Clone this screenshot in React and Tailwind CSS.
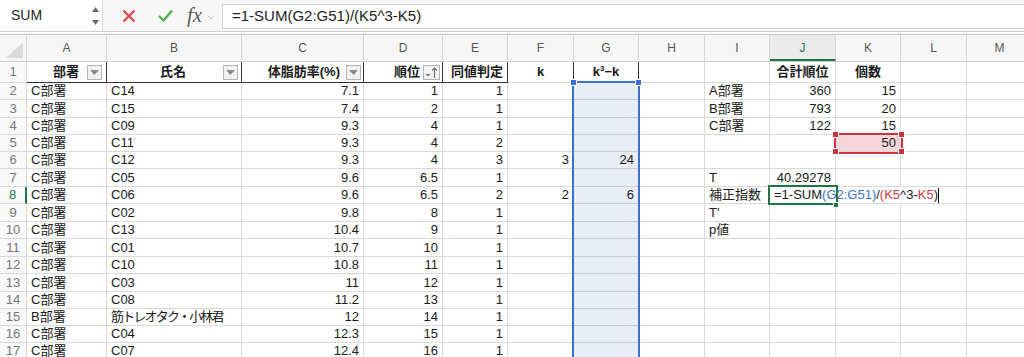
import React from 'react';

const LETTERS = 'ABCDEFGHIJKLM'.split('');
const W = [
  'w-[80px]', 'w-[135px]', 'w-[122px]', 'w-[79px]', 'w-[65px]', 'w-[66px]', 'w-[65px]',
  'w-[66px]', 'w-[65px]', 'w-[66px]', 'w-[65px]', 'w-[66px]', 'w-[66px]',
];
const LEFT = [0, 1, 8];

// row number, row height, then A..K
const rows = [
  [2, 'h-[17px]', 'C部署', 'C14', '7.1', '1', '1', '', '', '', 'A部署', '360', '15'],
  [3, 'h-[18px]', 'C部署', 'C15', '7.4', '2', '1', '', '', '', 'B部署', '793', '20'],
  [4, 'h-[17px]', 'C部署', 'C09', '9.3', '4', '1', '', '', '', 'C部署', '122', '15'],
  [5, 'h-[17px]', 'C部署', 'C11', '9.3', '4', '2', '', '', '', '', '', '50'],
  [6, 'h-[17px]', 'C部署', 'C12', '9.3', '4', '3', '3', '24'],
  [7, 'h-[18px]', 'C部署', 'C05', '9.6', '6.5', '1', '', '', '', 'T', '40.29278'],
  [8, 'h-[17px]', 'C部署', 'C06', '9.6', '6.5', '2', '2', '6', '', '補正指数'],
  [9, 'h-[18px]', 'C部署', 'C02', '9.8', '8', '1', '', '', '', "T'"],
  [10, 'h-[17px]', 'C部署', 'C13', '10.4', '9', '1', '', '', '', 'p値'],
  [11, 'h-[18px]', 'C部署', 'C01', '10.7', '10', '1'],
  [12, 'h-[17px]', 'C部署', 'C10', '10.8', '11', '1'],
  [13, 'h-[18px]', 'C部署', 'C03', '11', '12', '1'],
  [14, 'h-[17px]', 'C部署', 'C08', '11.2', '13', '1'],
  [15, 'h-[17px]', 'B部署', '筋トレオタク・小林君', '12', '14', '1'],
  [16, 'h-[17px]', 'C部署', 'C04', '12.3', '15', '1'],
  [17, 'h-[17px]', 'C部署', 'C07', '12.4', '16', '1'],
];

function FilterBtn() {
  return (
    <span className="w-[15px] h-[15px] shrink-0 border border-[#b5b5b5] bg-[#f2f2f2] flex items-center justify-center">
      <svg width="9" height="5" viewBox="0 0 9 5"><path d="M0 0h9L4.5 5z" fill="#8a8a8a" /></svg>
    </span>
  );
}

function SortBtn() {
  return (
    <span className="w-[17px] h-[15px] shrink-0 border border-[#b5b5b5] bg-[#f2f2f2] flex items-center justify-center">
      <svg width="15" height="13" viewBox="0 0 15 13">
        <path d="M1.5 8h5L4 10.5z" fill="#7a7a7a" />
        <path d="M10.5 12V2M8 4.5 10.5 2 13 4.5" stroke="#6a6a6a" strokeWidth="1.1" fill="none" />
      </svg>
    </span>
  );
}

export default function App() {
  return (
    <div className="relative w-[1024px] h-[357px] overflow-hidden bg-white font-['Liberation_Sans','Noto_Sans_CJK_JP',sans-serif] text-[#1a1a1a]">
      {/* formula bar */}
      <div className="flex h-[32px] border-b border-[#cfcfcf] bg-[#f7f7f7]">
        <div className="w-[103px] shrink-0 bg-white border-r border-[#d6d6d6] flex items-center justify-between pl-[11px] pr-[2px]">
          <span className="text-[14px] text-[#222]">SUM</span>
          <svg width="9" height="22" viewBox="0 0 9 22">
            <path d="M4.5 2 8 7H1z" fill="#6a6a6a" />
            <path d="M4.5 20 8 15H1z" fill="#6a6a6a" />
          </svg>
        </div>
        <div className="w-[119px] shrink-0 flex items-center">
          <svg className="ml-[19px]" width="14" height="14" viewBox="0 0 14 14">
            <path d="M1.5 1.5 12.5 12.5M12.5 1.5 1.5 12.5" stroke="#e04a4f" strokeWidth="2.3" />
          </svg>
          <svg className="ml-[22px]" width="15" height="13" viewBox="0 0 15 13">
            <path d="M1 7 5.5 11.5 14 1.5" stroke="#4fae50" strokeWidth="2.3" fill="none" />
          </svg>
          <span className="ml-[14px] font-['Liberation_Serif',serif] italic text-[21px] text-[#5e5e5e] leading-none">fx</span>
          <svg className="ml-[5px] mt-[3px]" width="8" height="5" viewBox="0 0 8 5">
            <path d="M0.5 0.5 4 4 7.5 0.5" stroke="#c2c2c2" fill="none" />
          </svg>
        </div>
        <div className="flex-1 mt-[4px] h-[25px] bg-white border border-r-0 border-[#d6d6d6] flex items-center pl-[9px] text-[15px] text-[#222]">
          =1-SUM(G2:G51)/(K5^3-K5)
        </div>
      </div>
      <div className="h-[3px] border-b border-[#c6c6c6]" />

      {/* column headers */}
      <div className="flex h-[27px] border-b border-[#cfcfcf] bg-[#f6f6f6]">
        <div className="w-[27px] shrink-0 border-r border-[#d6d6d6]">
          <svg width="26" height="26" viewBox="0 0 26 26">
            <path d="M23 7V23H6z" fill="#dadada" />
          </svg>
        </div>
        {LETTERS.map((l, i) => (
          <div
            key={l}
            className={
              l === 'J'
                ? `${W[i]} shrink-0 flex items-center justify-center border-r border-[#d6d6d6] border-b-2 border-b-[#217346] bg-[#ebebeb] text-[12px] text-[#217346] pt-[2px]`
                : `${W[i]} shrink-0 flex items-center justify-center border-r border-[#d6d6d6] text-[12px] text-[#555]`
            }
          >
            {l}
          </div>
        ))}
      </div>

      {/* row 1 */}
      <div className="flex h-[21px] text-[13px] font-bold">
        <div className="w-[27px] shrink-0 flex items-center justify-center border-r border-b border-[#d9d9d9] bg-[#f9f9f9] text-[13px] font-normal text-[#777]">1</div>
        <div className="w-[80px] shrink-0 flex items-center justify-end gap-[8px] pr-[4px] border-r border-b border-[#333]">
          <span>部署</span><FilterBtn />
        </div>
        <div className="w-[135px] shrink-0 flex items-center justify-end gap-[37px] pr-[3px] border-r border-b border-[#333]">
          <span>氏名</span><FilterBtn />
        </div>
        <div className="w-[122px] shrink-0 flex items-center justify-end gap-[6px] pr-[2px] border-r border-b border-[#333]">
          <span>体脂肪率(%)</span><FilterBtn />
        </div>
        <div className="w-[79px] shrink-0 flex items-center justify-end gap-[3px] pr-[2px] border-r border-b border-[#333]">
          <span>順位</span><SortBtn />
        </div>
        <div className="w-[65px] shrink-0 flex items-center justify-end pr-[4px] border-r border-b border-[#333]">同値判定</div>
        <div className="w-[66px] shrink-0 flex items-center justify-center border-r border-r-[#333] border-b border-b-[#d9d9d9]">k</div>
        <div className="w-[65px] shrink-0 flex items-center justify-center border-r border-r-[#333] border-b border-b-[#d9d9d9]">
          <span>k<sup className="text-[8px] relative -top-[5px]">3</sup>−k</span>
        </div>
        <div className="w-[66px] shrink-0 border-r border-b border-[#d9d9d9]" />
        <div className="w-[65px] shrink-0 border-r border-b border-[#d9d9d9]" />
        <div className="w-[66px] shrink-0 flex items-center justify-center border-r border-b border-[#d9d9d9]">合計順位</div>
        <div className="w-[65px] shrink-0 flex items-center justify-center border-r border-b border-[#d9d9d9]">個数</div>
        <div className="w-[66px] shrink-0 border-r border-b border-[#d9d9d9]" />
        <div className="w-[66px] shrink-0 border-r border-b border-[#d9d9d9]" />
      </div>

      {/* data rows */}
      {rows.map(([n, h, ...vals]) => (
        <div key={n} className={`flex ${h} text-[13px]`}>
          <div
            className={
              n === 8
                ? 'w-[27px] shrink-0 flex items-center justify-center border-r-2 border-r-[#217346] border-b border-b-[#d9d9d9] bg-[#f9f9f9] text-[#217346]'
                : 'w-[27px] shrink-0 flex items-center justify-center border-r border-b border-[#d9d9d9] bg-[#f9f9f9] text-[#777]'
            }
          >
            {n}
          </div>
          {LETTERS.map((l, i) => {
            const v = vals[i] || '';
            const align = LEFT.includes(i) ? 'justify-start' : 'justify-end';
            let bg = 'border-[#d9d9d9]';
            if (i === 6) bg = 'bg-[#e8edf8] border-r-[#d9d9d9] border-b-[#c6ccd8]';
            if (i === 10 && n === 5) bg = 'bg-[#f6d6da] border-[#d9d9d9]';
            const narrow = v.length > 8 ? 'tracking-[-1.8px]' : '';
            return (
              <div key={l} className={`${W[i]} shrink-0 flex items-center ${align} px-[4px] border-r border-b whitespace-nowrap overflow-hidden ${bg} ${narrow}`}>
                {v}
              </div>
            );
          })}
        </div>
      ))}

      {/* G column selection */}
      <div className="absolute left-[572px] top-[81px] w-[68px] h-[290px] border-2 border-[#3b72d4]" />
      <div className="absolute left-[570px] top-[79px] w-[7px] h-[7px] bg-[#3b72d4] border border-white" />
      <div className="absolute left-[635px] top-[79px] w-[7px] h-[7px] bg-[#3b72d4] border border-white" />

      {/* K5 reference */}
      <div className="absolute left-[834px] top-[133px] w-[69px] h-[21px] border-2 border-[#c9343f]" />
      <div className="absolute left-[832px] top-[131px] w-[7px] h-[7px] bg-[#c9343f] border border-white" />
      <div className="absolute left-[898px] top-[131px] w-[7px] h-[7px] bg-[#c9343f] border border-white" />
      <div className="absolute left-[832px] top-[148px] w-[7px] h-[7px] bg-[#c9343f] border border-white" />
      <div className="absolute left-[898px] top-[148px] w-[7px] h-[7px] bg-[#c9343f] border border-white" />

      {/* J8 editing */}
      <div className="absolute left-[770px] top-[187px] h-[16px] w-[176px] bg-white flex items-center pl-[4px] text-[13px] whitespace-nowrap">
        <span>=1-SUM</span>
        <span className="text-[#3b72d4]">(G2:G51)</span>
        <span>/</span>
        <span className="text-[#d23a44]">(K5</span>
        <span>^3-</span>
        <span className="text-[#d23a44]">K5</span>
        <span>)</span>
        <span className="w-px h-[15px] bg-black" />
      </div>
      <div className="absolute left-[768px] top-[185px] w-[70px] h-[20px] border-2 border-[#217346]" />
      <div className="absolute left-[833px] top-[202px] w-[6px] h-[6px] bg-[#217346] border border-white" />
    </div>
  );
}
